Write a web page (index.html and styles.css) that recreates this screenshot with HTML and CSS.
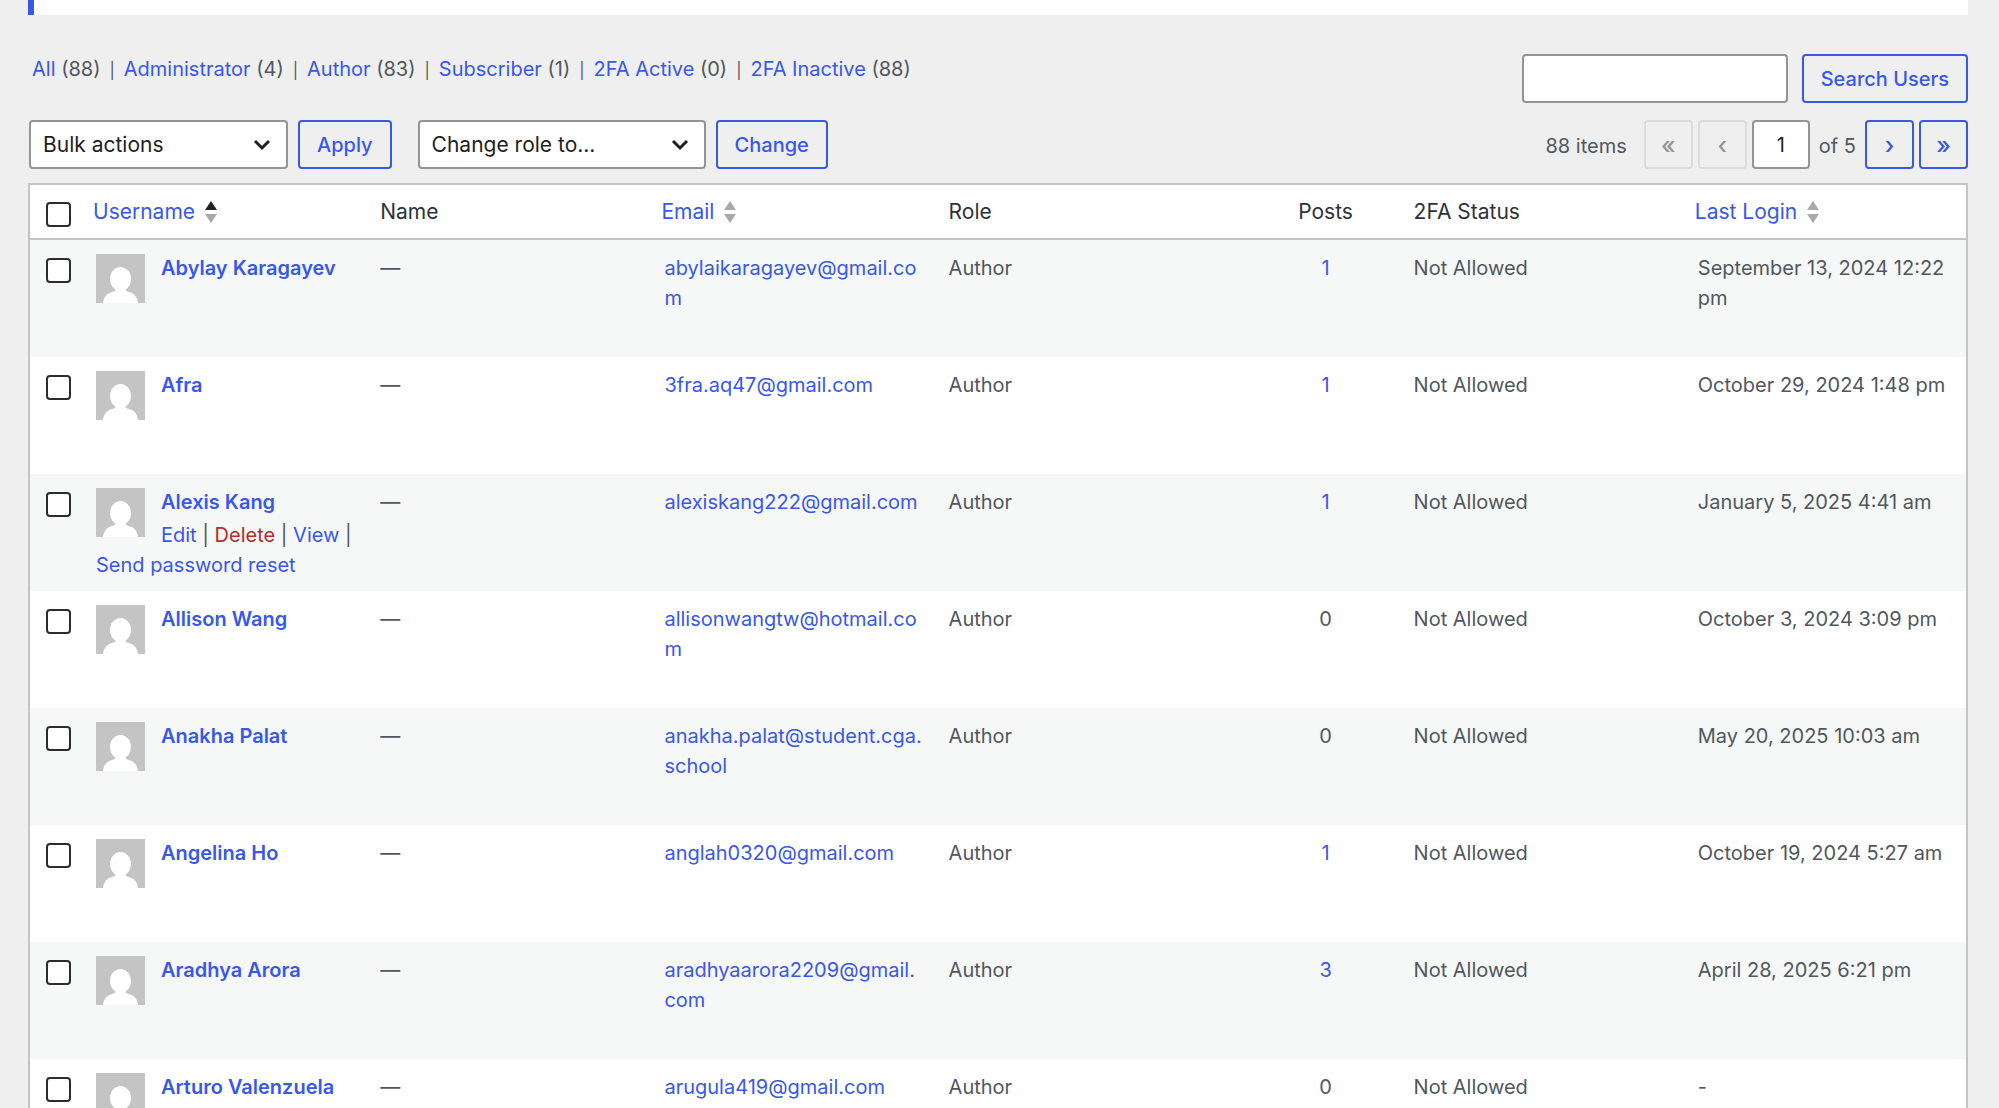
FILE: index.html
```html
<!DOCTYPE html>
<html lang="en">
<head>
    <meta charset="UTF-8">
    <meta name="viewport" content="width=device-width, initial-scale=1.0">
    <title>Users</title>
    <link rel="stylesheet" href="styles.css">
</head>
<body>
    <svg width="0" height="0" class="sprite" aria-hidden="true">
        <symbol id="avatar" viewBox="0 0 49 49">
            <rect width="49" height="49" fill="#c4c4c4"/>
            <ellipse cx="24.5" cy="25" rx="10.5" ry="12" fill="#fff"/>
            <path d="M20 34c0 3-2 3.500-5.500 4.500C10 40 7.500 44 7 49h35c-.5-5-3-9-7.500-10.500C31 37.500 29 37 29 34z" fill="#fff"/>
        </symbol>
        <symbol id="sort" viewBox="0 0 12 24">
            <path d="M6 1l6 9H0z" fill="currentColor"/>
            <path d="M0 14h12l-6 9z" fill="#a7aaad"/>
        </symbol>
    </svg>

    <div class="wrap">
        <div class="notice"></div>

        <div class="top">
            <ul class="subsubsub">
                <li><a href="#">All</a> (88)</li>
                <li><a href="#">Administrator</a> (4)</li>
                <li><a href="#">Author</a> (83)</li>
                <li><a href="#">Subscriber</a> (1)</li>
                <li><a href="#">2FA Active</a> (0)</li>
                <li><a href="#">2FA Inactive</a> (88)</li>
            </ul>
            <form class="search-box">
                <input type="search" id="user-search" aria-label="Search Users">
                <button type="button" class="button">Search Users</button>
            </form>
        </div>

        <div class="tablenav">
            <div class="actions">
                <select class="bulk" aria-label="Select bulk action">
                    <option>Bulk actions</option>
                    <option>Delete</option>
                </select>
                <button type="button" class="button">Apply</button>
            </div>
            <div class="actions">
                <select class="role" aria-label="Change role to">
                    <option>Change role to...</option>
                    <option>Author</option>
                    <option>Subscriber</option>
                </select>
                <button type="button" class="button">Change</button>
            </div>
            <div class="pages">
                <span class="count">88 items</span>
                <button type="button" class="button page" disabled aria-label="First page">«</button>
                <button type="button" class="button page" disabled aria-label="Previous page">‹</button>
                <input type="text" class="current" value="1" aria-label="Current page">
                <span class="total">of 5</span>
                <button type="button" class="button page" aria-label="Next page">›</button>
                <button type="button" class="button page" aria-label="Last page">»</button>
            </div>
        </div>

        <table class="users">
            <colgroup>
                <col class="col-check">
                <col class="col-data">
                <col class="col-data">
                <col class="col-data">
                <col>
                <col class="col-posts">
                <col class="col-data">
                <col class="col-data">
            </colgroup>
            <thead>
                <tr>
                    <td class="check"><input type="checkbox" aria-label="Select All"></td>
                    <th class="sortable sorted"><a href="#">Username <svg class="sort"><use href="#sort"/></svg></a></th>
                    <th>Name</th>
                    <th class="sortable"><a href="#">Email <svg class="sort"><use href="#sort"/></svg></a></th>
                    <th>Role</th>
                    <th class="num">Posts</th>
                    <th>2FA Status</th>
                    <th class="sortable"><a href="#">Last Login <svg class="sort"><use href="#sort"/></svg></a></th>
                </tr>
            </thead>
            <tbody>
                <tr>
                    <td class="check"><input type="checkbox" aria-label="Select Abylay Karagayev"></td>
                    <td class="username"><svg class="avatar"><use href="#avatar"/></svg><a href="#"><strong>Abylay Karagayev</strong></a></td>
                    <td>—</td>
                    <td><a href="#">abylaikaragayev@gmail.com</a></td>
                    <td>Author</td>
                    <td class="num"><a href="#">1</a></td>
                    <td>Not Allowed</td>
                    <td>September 13, 2024 12:22 pm</td>
                </tr>
                <tr>
                    <td class="check"><input type="checkbox" aria-label="Select Afra"></td>
                    <td class="username"><svg class="avatar"><use href="#avatar"/></svg><a href="#"><strong>Afra</strong></a></td>
                    <td>—</td>
                    <td><a href="#">3fra.aq47@gmail.com</a></td>
                    <td>Author</td>
                    <td class="num"><a href="#">1</a></td>
                    <td>Not Allowed</td>
                    <td>October 29, 2024 1:48 pm</td>
                </tr>
                <tr>
                    <td class="check"><input type="checkbox" aria-label="Select Alexis Kang"></td>
                    <td class="username">
                        <svg class="avatar"><use href="#avatar"/></svg><a href="#"><strong>Alexis Kang</strong></a>
                        <div class="row-actions"><a href="#">Edit</a> | <a href="#" class="delete">Delete</a> | <a href="#">View</a> | <a href="#">Send password reset</a></div>
                    </td>
                    <td>—</td>
                    <td><a href="#">alexiskang222@gmail.com</a></td>
                    <td>Author</td>
                    <td class="num"><a href="#">1</a></td>
                    <td>Not Allowed</td>
                    <td>January 5, 2025 4:41 am</td>
                </tr>
                <tr>
                    <td class="check"><input type="checkbox" aria-label="Select Allison Wang"></td>
                    <td class="username"><svg class="avatar"><use href="#avatar"/></svg><a href="#"><strong>Allison Wang</strong></a></td>
                    <td>—</td>
                    <td><a href="#">allisonwangtw@hotmail.com</a></td>
                    <td>Author</td>
                    <td class="num">0</td>
                    <td>Not Allowed</td>
                    <td>October 3, 2024 3:09 pm</td>
                </tr>
                <tr>
                    <td class="check"><input type="checkbox" aria-label="Select Anakha Palat"></td>
                    <td class="username"><svg class="avatar"><use href="#avatar"/></svg><a href="#"><strong>Anakha Palat</strong></a></td>
                    <td>—</td>
                    <td><a href="#">anakha.palat@student.cga.<wbr>school</a></td>
                    <td>Author</td>
                    <td class="num">0</td>
                    <td>Not Allowed</td>
                    <td>May 20, 2025 10:03 am</td>
                </tr>
                <tr>
                    <td class="check"><input type="checkbox" aria-label="Select Angelina Ho"></td>
                    <td class="username"><svg class="avatar"><use href="#avatar"/></svg><a href="#"><strong>Angelina Ho</strong></a></td>
                    <td>—</td>
                    <td><a href="#">anglah0320@gmail.com</a></td>
                    <td>Author</td>
                    <td class="num"><a href="#">1</a></td>
                    <td>Not Allowed</td>
                    <td>October 19, 2024 5:27 am</td>
                </tr>
                <tr>
                    <td class="check"><input type="checkbox" aria-label="Select Aradhya Arora"></td>
                    <td class="username"><svg class="avatar"><use href="#avatar"/></svg><a href="#"><strong>Aradhya Arora</strong></a></td>
                    <td>—</td>
                    <td><a href="#">aradhyaarora2209@gmail.<wbr>com</a></td>
                    <td>Author</td>
                    <td class="num"><a href="#">3</a></td>
                    <td>Not Allowed</td>
                    <td>April 28, 2025 6:21 pm</td>
                </tr>
                <tr>
                    <td class="check"><input type="checkbox" aria-label="Select Arturo Valenzuela"></td>
                    <td class="username"><svg class="avatar"><use href="#avatar"/></svg><a href="#"><strong>Arturo Valenzuela</strong></a></td>
                    <td>—</td>
                    <td><a href="#">arugula419@gmail.com</a></td>
                    <td>Author</td>
                    <td class="num">0</td>
                    <td>Not Allowed</td>
                    <td>-</td>
                </tr>
            </tbody>
        </table>
    </div>
</body>
</html>
```

FILE: styles.css
```css
* {
    box-sizing: border-box;
}
body {
    margin: 0;
    height: 100vh;
    overflow: hidden;
    background: #efefef;
    color: #50575e;
    font-family: Inter, "Liberation Sans", sans-serif;
    font-size: 20px;
    line-height: 30px;
}
.sprite {
    position: absolute;
}
.wrap {
    padding: 0 31px 0 28px;
}
a {
    color: #3858e9;
    text-decoration: none;
}
.notice {
    height: 15px;
    background: #fff;
    border-left: 6px solid #3858e9;
}

/* filters and search */
.top {
    display: flex;
    justify-content: space-between;
    align-items: flex-start;
    padding-top: 39px;
}
.subsubsub {
    display: flex;
    list-style: none;
    margin: 0;
    padding: 0 0 0 4px;
}
.subsubsub li + li::before {
    content: "|";
    margin: 0 9px;
    font-size: 16px;
}
.search-box {
    display: flex;
    gap: 14px;
}

/* controls */
input, select, button {
    font-family: inherit;
    font-size: 20px;
    margin: 0;
}
input[type="search"], .current, select {
    height: 49px;
    background: #fff;
    border: 2px solid #949494;
    border-radius: 4px;
    color: #1e1e1e;
}
input[type="search"] {
    width: 266px;
}
select {
    appearance: none;
    padding: 0 38px 0 12px;
    background: #fff url("data:image/svg+xml,%3Csvg xmlns='http://www.w3.org/2000/svg' width='18' height='12' viewBox='0 0 18 12'%3E%3Cpath d='M2 2l7 7 7-7' fill='none' stroke='%231e1e1e' stroke-width='3'/%3E%3C/svg%3E") no-repeat right 15px center;
    font-size: 21px;
}
.bulk {
    width: 259px;
}
.role {
    width: 288px;
}
.button {
    height: 49px;
    padding: 0 17px;
    background: transparent;
    border: 2px solid #3858e9;
    border-radius: 4px;
    color: #3858e9;
    font-weight: 500;
    white-space: nowrap;
    cursor: pointer;
}
.button:disabled {
    border-color: #dcdcde;
    color: #949494;
    cursor: default;
}
.tablenav {
    display: flex;
    align-items: center;
    gap: 26px;
    padding: 17px 0 14px 1px;
}
.actions {
    display: flex;
    gap: 10px;
}
.pages {
    display: flex;
    align-items: center;
    gap: 5px;
    margin-left: auto;
}
.count, .total {
    padding-top: 3px;
}
.count {
    margin-right: 12px;
}
.total {
    margin: 0 4px;
}
.page {
    width: 49px;
    padding: 2px 0 0;
    font-size: 24px;
}
.current {
    width: 58px;
    padding: 0;
    text-align: center;
}

/* users table */
.users {
    width: 100%;
    table-layout: fixed;
    border-collapse: separate;
    border-spacing: 0;
    background: #fff;
    border: 2px solid #c3c4c7;
}
.col-check {
    width: 50px;
}
.col-data {
    width: 14.68%;
}
.col-posts {
    width: 144px;
}
th, td {
    padding: 13px 8px 13px 16px;
    text-align: left;
    vertical-align: top;
    overflow-wrap: break-word;
}
thead th, thead td {
    padding-top: 12px;
    padding-bottom: 11px;
    border-bottom: 2px solid #c3c4c7;
    color: #2c3338;
    font-size: 21px;
    font-weight: 400;
}
th.sortable {
    padding-left: 13px;
}
.sortable a {
    display: flex;
    align-items: center;
    gap: 10px;
}
.sort {
    width: 12px;
    height: 24px;
    color: #a7aaad;
}
.sorted .sort {
    color: #1d2327;
}
.users .num {
    padding-right: 16px;
    text-align: center;
}
.users td.check {
    padding-right: 0;
}
tbody tr {
    height: 117px;
}
tbody td {
    padding-bottom: 11px;
}
tbody tr:nth-child(odd) {
    background: #f6f7f7;
}
input[type="checkbox"] {
    appearance: none;
    display: block;
    width: 25px;
    height: 25px;
    margin-top: 5px;
    background: #fff;
    border: 2px solid #2c2c2c;
    border-radius: 4px;
}
.avatar {
    float: left;
    width: 49px;
    height: 49px;
    margin: 1px 16px 0 0;
}
strong {
    font-weight: 600;
}
.row-actions {
    padding-top: 3px;
}
.delete {
    color: #b32d2e;
}
```
